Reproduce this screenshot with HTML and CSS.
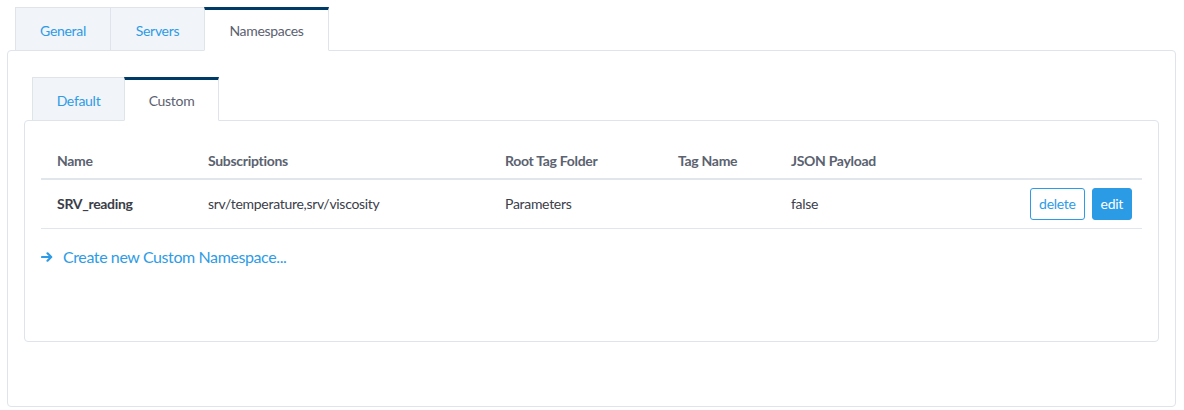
FILE: index.html
```html
<!DOCTYPE html>
<html lang="en">
<head>
<meta charset="utf-8">
<title>Namespaces</title>
<link rel="stylesheet" href="styles.css">
</head>
<body>
<div class="page">
  <ul class="tabs tabs-outer">
    <li class="tab">General</li>
    <li class="tab">Servers</li>
    <li class="tab active">Namespaces</li>
  </ul>
  <div class="panel panel-outer">
    <ul class="tabs tabs-inner">
      <li class="tab">Default</li>
      <li class="tab active">Custom</li>
    </ul>
    <div class="panel panel-inner">
      <table class="grid">
        <colgroup>
          <col class="c-name">
          <col class="c-subs">
          <col class="c-root">
          <col class="c-tag">
          <col class="c-json">
          <col class="c-act">
        </colgroup>
        <thead>
          <tr>
            <th>Name</th>
            <th>Subscriptions</th>
            <th>Root Tag Folder</th>
            <th>Tag Name</th>
            <th>JSON Payload</th>
            <th></th>
          </tr>
        </thead>
        <tbody>
          <tr>
            <td class="strong">SRV_reading</td>
            <td>srv/temperature,srv/viscosity</td>
            <td>Parameters</td>
            <td></td>
            <td>false</td>
            <td class="actions">
              <button class="btn btn-outline">delete</button>
              <button class="btn btn-primary">edit</button>
            </td>
          </tr>
        </tbody>
      </table>
      <a class="create-link" href="#">
        <svg class="arrow" width="12" height="10" viewBox="0 0 12 10"><path d="M1 5H10M6.5 1.3L10.2 5L6.5 8.7" fill="none" stroke="currentColor" stroke-width="2.2" stroke-linecap="round" stroke-linejoin="round"/></svg>
        <span>Create new Custom Namespace...</span>
      </a>
    </div>
  </div>
</div>
</body>
</html>
```

FILE: styles.css
```css
* { box-sizing: border-box; }

html, body {
  margin: 0;
  padding: 0;
  background: #ffffff;
}

body {
  font-family: Lato, "Open Sans", sans-serif;
  font-size: 14px;
  letter-spacing: -0.3px;
  color: #3b404a;
}

.page {
  padding: 7px 8px 0 7px;
}

.tabs {
  list-style: none;
  margin: 0;
  padding: 0;
  display: flex;
  position: relative;
  z-index: 1;
}

.tabs-outer { margin-left: 8px; }
.tabs-inner { margin-left: 8px; }

.tab {
  height: 44px;
  margin-bottom: -1px;
  margin-right: -1px;
  padding: 13px 0 0;
  line-height: 20px;
  text-align: center;
  background: #f1f4f8;
  border: 1px solid #dfe4ea;
  color: #2e9be6;
  font-size: 14px;
}

.tab.active {
  background: #ffffff;
  color: #5c6170;
  border-top: 3px solid #003a66;
  border-bottom-color: #ffffff;
  padding-top: 11px;
}

.tabs-outer .tab:nth-child(1) { width: 96px; }
.tabs-outer .tab:nth-child(2) { width: 95px; }
.tabs-outer .tab:nth-child(3) { width: 125px; }
.tabs-inner .tab:nth-child(1) { width: 93px; }
.tabs-inner .tab:nth-child(2) { width: 95px; }

.panel {
  border: 1px solid #dfe4ea;
  border-radius: 4px;
  background: #ffffff;
}

.panel-outer {
  padding: 26px 16px 64px;
  height: 357px;
}

.panel-inner {
  padding: 23px 16px 0;
  height: 222px;
}

.grid {
  width: 100%;
  border-collapse: collapse;
  table-layout: fixed;
}

.c-name { width: 151px; }
.c-subs { width: 297px; }
.c-root { width: 173px; }
.c-tag { width: 113px; }
.c-json { width: 150px; }

.grid th {
  text-align: left;
  font-weight: 700;
  color: #5b6270;
  padding: 7px 16px 7px;
  line-height: 20px;
  border-bottom: 2px solid #e1e6ec;
}

.grid td {
  padding: 8px 16px;
  height: 48px;
  line-height: 20px;
  border-bottom: 1px solid #e1e6ec;
  color: #3b404a;
  vertical-align: middle;
}

.grid td.strong {
  font-weight: 700;
  color: #3a3e47;
}

.grid td.actions {
  text-align: right;
  padding-right: 10px;
  white-space: nowrap;
  font-size: 0;
}

.btn {
  font-family: inherit;
  font-size: 14px;
  letter-spacing: -0.3px;
  height: 32px;
  line-height: 20px;
  padding: 0 8px;
  border-radius: 3px;
  cursor: pointer;
  vertical-align: middle;
}

.btn + .btn { margin-left: 7px; }

.btn-outline {
  background: #ffffff;
  border: 1px solid #2e9be6;
  color: #2e9be6;
}

.btn-primary {
  background: #2b9be6;
  border: 1px solid #2b9be6;
  color: #ffffff;
}

.create-link {
  display: flex;
  align-items: center;
  gap: 10px;
  margin-top: 17px;
  color: #2e9be6;
  text-decoration: none;
  font-size: 16px;
  letter-spacing: -0.4px;
  line-height: 22px;
}

.arrow { display: block; margin-top: -1px; }
```
